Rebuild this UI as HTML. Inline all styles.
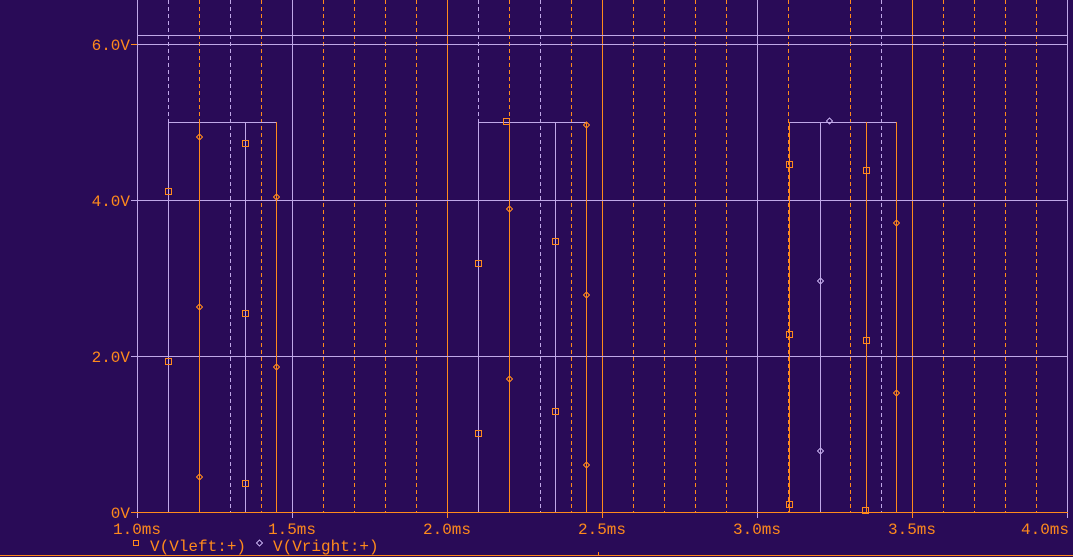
<!DOCTYPE html>
<html><head><meta charset="utf-8"><style>
html,body{margin:0;padding:0;background:#290b57;width:1073px;height:557px;overflow:hidden}
svg{display:block}
text{font-family:"Liberation Mono",monospace;font-size:16px;fill:#ff8a1c}
</style></head><body>
<svg width="1073" height="557" viewBox="0 0 1073 557" xmlns="http://www.w3.org/2000/svg">
<rect width="1073" height="557" fill="#290b57"/>
<g stroke-width="1" fill="none" shape-rendering="crispEdges">
<g stroke="#ff8a1c" stroke-dasharray="4,3">
<path d="M199.5 0V512M261.5 0V512M323.5 0V512M354.5 0V512M385.5 0V512M416.5 0V512M509.5 0V512M571.5 0V512M633.5 0V512M664.5 0V512M695.5 0V512M726.5 0V512M788.5 0V512M850.5 0V512M943.5 0V512M974.5 0V512M1005.5 0V512M1036.5 0V512"/>
</g>
<g stroke="#c0a8e8" stroke-dasharray="4,3">
<path d="M168.5 0V512M230.5 0V512M478.5 0V512M540.5 0V512M881.5 0V512"/>
</g>
<path stroke="#c0a8e8" d="M137.5 0V518M292.5 0V518M757.5 0V518M1067.5 0V518"/>
<path stroke="#ff8a1c" d="M447.5 0V518M602.5 0V518M912.5 0V518"/>
<path stroke="#c0a8e8" d="M137 35.5H1068M137 44.5H1068M131 200.5H1068M131 356.5H1068"/>
<path stroke="#ff8a1c" d="M131 44.5H137M131 512.5H1068"/>
<path stroke="#c0a8e8" d="M168.5 512V122.5H276.5M245.5 122V512M478.5 512V122.5H586.5M555.5 122V512M789.5 122.5H896.5M820.5 122V512"/>
<path stroke="#ff8a1c" d="M199.5 122V512M276.5 122V512M509.5 122V512M586.5 122V512M789.5 122V512M866.5 122V512M896.5 122V512"/>
<g stroke="#ff8a1c">
<path d="M165.5 188.5h6v6h-6zM165.5 358.5h6v6h-6zM242.5 140.5h6v6h-6zM242.5 310.5h6v6h-6zM242.5 480.5h6v6h-6zM475.5 260.5h6v6h-6zM475.5 430.5h6v6h-6zM552.5 238.5h6v6h-6zM552.5 408.5h6v6h-6zM503.5 118.5h6v6h-6zM786.5 161.5h6v6h-6zM786.5 331.5h6v6h-6zM786.5 501.5h6v6h-6zM863.5 167.5h6v6h-6zM863.5 337.5h6v6h-6zM862.5 507.5h6v6h-6z"/>
<path d="M199.5 134l3 3-3 3-3-3zM199.5 304l3 3-3 3-3-3zM199.5 474l3 3-3 3-3-3zM276.5 194l3 3-3 3-3-3zM276.5 364l3 3-3 3-3-3zM509.5 206l3 3-3 3-3-3zM509.5 376l3 3-3 3-3-3zM586.5 122l3 3-3 3-3-3zM586.5 292l3 3-3 3-3-3zM586.5 462l3 3-3 3-3-3zM896.5 220l3 3-3 3-3-3zM896.5 390l3 3-3 3-3-3z"/>
</g>
<g stroke="#c0a8e8">
<path d="M820.5 278l3 3-3 3-3-3zM820.5 448l3 3-3 3-3-3zM829.5 118l3 3-3 3-3-3z"/>
</g>
<path stroke="#ff8a1c" d="M0 555.5H1073M598.5 552V556"/>
<path stroke="#ff8a1c" d="M133.5 540.5h5v5h-5z"/>
<path stroke="#c0a8e8" d="M259.5 540l3 3-3 3-3-3z"/>
</g>
<g text-anchor="end">
<text x="130" y="50">6.0V</text>
<text x="130" y="206">4.0V</text>
<text x="130" y="362">2.0V</text>
<text x="130" y="518">0V</text>
</g>
<g text-anchor="middle">
<text x="137" y="534">1.0ms</text>
<text x="292" y="534">1.5ms</text>
<text x="447" y="534">2.0ms</text>
<text x="602" y="534">2.5ms</text>
<text x="757" y="534">3.0ms</text>
<text x="912" y="534">3.5ms</text>
<text x="1045" y="534">4.0ms</text>
</g>
<text x="150" y="551">V(Vleft:+)</text>
<text x="273" y="551">V(Vright:+)</text>
</svg>
</body></html>
